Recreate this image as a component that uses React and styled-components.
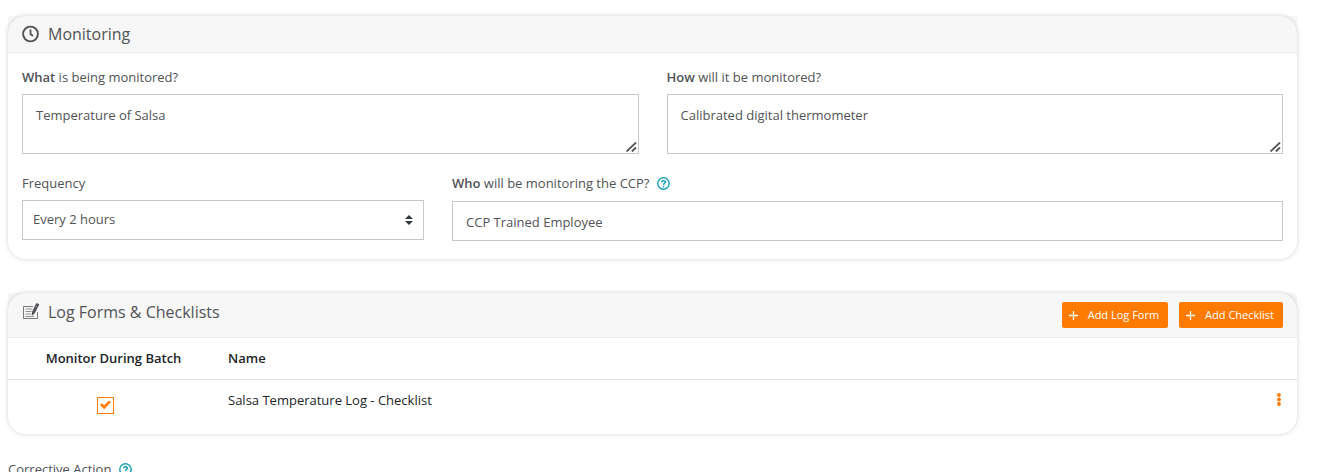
import { useState } from "react";
import styled, { createGlobalStyle } from "styled-components";

const textColour = "#515356";
const borderColour = "#c8c8c8";
const orange = "#ff7a00";
const teal = "#17a2b8";

const GlobalStyle = createGlobalStyle`
  * {
    box-sizing: border-box;
  }

  body {
    margin: 0;
    background: #fff;
    color: ${textColour};
    font-family: "Open Sans", sans-serif;
    font-size: 13px;
    line-height: 20px;
  }

  button, input, select, textarea {
    font: inherit;
    color: inherit;
  }
`;

const Page = styled.main`
  display: flex;
  flex-direction: column;
  gap: 34px;
  padding: 16px 21px 0 8px;
  height: 100vh;
  overflow: hidden;
`;

const Card = styled.section`
  flex: none;
  border-radius: 18px;
  background: #fff;
  box-shadow: 0 0 5px rgba(0, 0, 0, 0.18);
`;

const CardHeader = styled.header`
  display: flex;
  align-items: flex-start;
  justify-content: space-between;
  height: ${(props) => (props.$tall ? "45px" : "37px")};
  padding: ${(props) => (props.$tall ? "7px" : "6px")} 14px 0;
  background: rgba(0, 0, 0, 0.03);
  border-bottom: 1px solid #ebebeb;
`;

const CardTitle = styled.h2`
  display: flex;
  align-items: center;
  gap: 8px;
  margin: 0;
  font-size: 16px;
  line-height: 24px;
  font-weight: 400;
`;

const TitleIcon = styled.svg`
  flex: none;
  width: 18px;
  height: 18px;
`;

const CardBody = styled.div`
  padding: 14px 14px 18px;
`;

const FieldRow = styled.div`
  display: grid;
  grid-template-columns: ${(props) => props.$columns};
  gap: 28px;
  margin-bottom: ${(props) => (props.$last ? "0" : "19px")};
`;

const Field = styled.div`
  display: flex;
  flex-direction: column;
`;

const Label = styled.label`
  display: flex;
  align-items: center;
  gap: 8px;
  margin-bottom: ${(props) => (props.$help ? "8px" : "7px")};
`;

const Strong = styled.b`
  font-weight: 600;
`;

const TextArea = styled.textarea`
  display: block;
  width: 100%;
  height: 60px;
  padding: 10px 13px;
  border: 1px solid ${borderColour};
  background: #fff;
  resize: none;
  outline: none;
`;

const AreaWrapper = styled.div`
  position: relative;
`;

const Grip = styled.svg`
  position: absolute;
  right: 2px;
  bottom: 2px;
  width: 11px;
  height: 10px;
  pointer-events: none;
`;

const Input = styled.input`
  width: 100%;
  height: 40px;
  padding: 2px 13px 0;
  border: 1px solid ${borderColour};
  background: #fff;
  outline: none;
`;

const SelectWrapper = styled.div`
  position: relative;
`;

const Select = styled.select`
  display: block;
  width: 100%;
  height: 40px;
  padding: 0 30px 2px 10px;
  border: 1px solid ${borderColour};
  border-radius: 0;
  background: #fff;
  appearance: none;
  outline: none;
`;

const Arrows = styled.svg`
  position: absolute;
  right: 11px;
  top: 15px;
  width: 8px;
  height: 10px;
  pointer-events: none;
`;

const ButtonGroup = styled.div`
  display: flex;
  gap: 11px;
  padding-top: 2px;
`;

const AddButton = styled.button`
  display: flex;
  align-items: center;
  gap: 10px;
  height: 26px;
  padding: 0 9px 0 7px;
  border: none;
  border-radius: 2px;
  background: ${orange};
  color: #fff;
  font-size: 11px;
  cursor: pointer;
`;

const Table = styled.table`
  width: 100%;
  border-collapse: collapse;
  color: #212529;
`;

const HeadCell = styled.th`
  height: 41px;
  padding: ${(props) => (props.$center ? "0" : "0 0 0 9px")};
  border-bottom: 1px solid #dee2e6;
  font-weight: 600;
  text-align: ${(props) => (props.$center ? "center" : "left")};
  width: ${(props) => props.$width || "auto"};
`;

const Cell = styled.td`
  height: 55px;
  padding: ${(props) => props.$padding || "10px 0 0 9px"};
  vertical-align: top;
  text-align: ${(props) => props.$align || "left"};
`;

const Checkbox = styled.input`
  display: inline-grid;
  place-content: center;
  appearance: none;
  width: 17px;
  height: 17px;
  margin: 0;
  border: 1px solid ${orange};
  background: #fff;
  vertical-align: top;

  &:checked::before {
    content: "";
    width: 11px;
    height: 9px;
    background: ${orange};
    clip-path: polygon(0 50%, 18% 30%, 38% 54%, 82% 0, 100% 18%, 38% 96%);
  }
`;

const MenuButton = styled.button`
  display: inline-flex;
  padding: 0;
  border: none;
  background: none;
  vertical-align: top;
  cursor: pointer;
`;

const Footer = styled.div`
  display: flex;
  align-items: center;
  gap: 8px;
  margin-top: -9px;
`;

const HelpIcon = () => (
  <svg width="13" height="13" viewBox="0 0 13 13" fill="none" stroke={teal}>
    <circle cx="6.5" cy="6.5" r="5.7" strokeWidth="1.4" />
    <path d="M4.6 5.2C4.7 3.2 8.5 3.2 8.4 5.3C8.3 6.4 6.6 6.4 6.5 7.8" strokeWidth="1.6" />
    <path d="M6.5 8.7V10.3" strokeWidth="1.6" />
  </svg>
);

const ResizableArea = ({ id, value, onChange }) => (
  <AreaWrapper>
    <TextArea id={id} value={value} onChange={onChange} />
    <Grip viewBox="0 0 11 10" stroke="#515356" strokeWidth="1.8">
      <path d="M0.5 9.5L10 0.5M5.8 9.5L10 5.5" />
    </Grip>
  </AreaWrapper>
);

const PlusIcon = () => (
  <svg width="9" height="9" viewBox="0 0 9 9" stroke="#fff" strokeWidth="1.3">
    <path d="M4.5 0V9M0 4.5H9" />
  </svg>
);

const App = () => {
  const [what, setWhat] = useState("Temperature of Salsa");
  const [how, setHow] = useState("Calibrated digital thermometer");
  const [who, setWho] = useState("CCP Trained Employee");
  const [frequency, setFrequency] = useState("Every 2 hours");
  const [duringBatch, setDuringBatch] = useState(true);

  return (
    <>
      <GlobalStyle />
      <Page>
        <Card>
          <CardHeader>
            <CardTitle>
              <TitleIcon viewBox="0 0 18 18" fill="none" stroke={textColour}>
                <circle cx="8.5" cy="9" r="7.4" strokeWidth="1.9" />
                <path d="M8.5 4.5V9L11 11" strokeWidth="1.8" />
              </TitleIcon>
              Monitoring
            </CardTitle>
          </CardHeader>
          <CardBody>
            <FieldRow $columns="1fr 1fr">
              <Field>
                <Label htmlFor="what">
                  <span>
                    <Strong>What</Strong> is being monitored?
                  </span>
                </Label>
                <ResizableArea
                  id="what"
                  value={what}
                  onChange={(e) => setWhat(e.target.value)}
                />
              </Field>
              <Field>
                <Label htmlFor="how">
                  <span>
                    <Strong>How</Strong> will it be monitored?
                  </span>
                </Label>
                <ResizableArea
                  id="how"
                  value={how}
                  onChange={(e) => setHow(e.target.value)}
                />
              </Field>
            </FieldRow>
            <FieldRow $columns="402fr 831fr" $last>
              <Field>
                <Label htmlFor="frequency">Frequency</Label>
                <SelectWrapper>
                  <Select
                    id="frequency"
                    value={frequency}
                    onChange={(e) => setFrequency(e.target.value)}
                  >
                    <option>Every 2 hours</option>
                  </Select>
                  <Arrows viewBox="0 0 8 10" fill="#343a40">
                    <path d="M0 4L4 0L8 4ZM0 6H8L4 10Z" />
                  </Arrows>
                </SelectWrapper>
              </Field>
              <Field>
                <Label htmlFor="who" $help>
                  <span>
                    <Strong>Who</Strong> will be monitoring the CCP?
                  </span>
                  <HelpIcon />
                </Label>
                <Input
                  id="who"
                  value={who}
                  onChange={(e) => setWho(e.target.value)}
                />
              </Field>
            </FieldRow>
          </CardBody>
        </Card>

        <Card>
          <CardHeader $tall>
            <CardTitle>
              <TitleIcon viewBox="0 0 18 18" fill="none">
                <path d="M11 3.5H1.5V15.5H15.5V9" stroke="#77797c" />
                <path
                  d="M3.5 6H10M3.5 8.5H9.5M3.5 11H9M3.5 13.5H12"
                  stroke="#909294"
                />
                <path
                  d="M13.6 1.2L14.8 0L17.2 1.2L16.6 3L12.6 10.6L9.8 12.8L10 9Z"
                  fill={textColour}
                />
                <path d="M13.2 3L15.8 4.4" stroke="#b5b7b9" strokeWidth="0.6" />
              </TitleIcon>
              Log Forms &amp; Checklists
            </CardTitle>
            <ButtonGroup>
              <AddButton type="button">
                <PlusIcon />
                Add Log Form
              </AddButton>
              <AddButton type="button">
                <PlusIcon />
                Add Checklist
              </AddButton>
            </ButtonGroup>
          </CardHeader>
          <Table>
            <thead>
              <tr>
                <HeadCell $width="211px" $center>
                  Monitor During Batch
                </HeadCell>
                <HeadCell>Name</HeadCell>
                <HeadCell $width="60px" />
              </tr>
            </thead>
            <tbody>
              <tr>
                <Cell $align="center" $padding="17px 16px 0 0">
                  <Checkbox
                    type="checkbox"
                    aria-label="Monitor During Batch"
                    checked={duringBatch}
                    onChange={(e) => setDuringBatch(e.target.checked)}
                  />
                </Cell>
                <Cell>Salsa Temperature Log - Checklist</Cell>
                <Cell $align="right" $padding="13px 16px 0 0">
                  <MenuButton type="button" aria-label="Row actions">
                    <svg width="4" height="13" viewBox="0 0 4 13" fill={orange}>
                      <circle cx="2" cy="2" r="1.9" />
                      <circle cx="2" cy="6.5" r="1.9" />
                      <circle cx="2" cy="11" r="1.9" />
                    </svg>
                  </MenuButton>
                </Cell>
              </tr>
            </tbody>
          </Table>
        </Card>

        <Footer>
          Corrective Action
          <HelpIcon />
        </Footer>
      </Page>
    </>
  );
};

export default App;
